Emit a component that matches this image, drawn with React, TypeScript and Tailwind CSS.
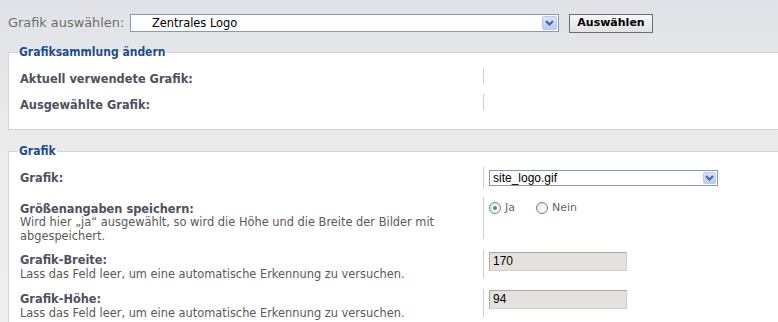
import React from "react";

const Chevron = () => (
  <svg width="9" height="6" viewBox="0 0 9 6" className="block">
    <path d="M1 1 L4.5 4.5 L8 1" fill="none" stroke="#4d6185" strokeWidth="2" />
  </svg>
);

function FakeSelect({ value, className, textClass, arrowClass }: { value: string; className: string; textClass: string; arrowClass: string }) {
  return (
    <div className={"flex items-center border border-[#7f9db9] bg-white " + className}>
      <span className={"flex-1 truncate text-black " + textClass}>{value}</span>
      <span className={"flex items-center justify-center rounded-[2px] border border-[#b9c9ef] bg-[linear-gradient(180deg,#d8e2fb,#b9cbf5)] " + arrowClass}>
        <Chevron />
      </span>
    </div>
  );
}

function Radio({ checked }: { checked?: boolean }) {
  return (
    <span className="flex h-[12px] w-[12px] items-center justify-center rounded-full border border-[#6f83a0] bg-[radial-gradient(circle_at_60%_60%,#ffffff,#dcdcd6)]">
      {checked && <span className="h-[4px] w-[4px] rounded-full bg-[#3aa53a]" />}
    </span>
  );
}

function Row({ h, mt, pt = "pt-[5px]", lh = "leading-[13px]", label, desc, children }: { h: string; mt: string; pt?: string; lh?: string; label: string; desc?: React.ReactNode; children?: React.ReactNode }) {
  return (
    <div className={"flex " + h + " " + mt}>
      <div className={"w-[463px] shrink-0 " + pt}>
        <div className={"text-[11.4px] font-bold text-[#4d525e] " + lh}>{label}</div>
        {desc && <div className="text-[11.4px] leading-[14px] text-[#595959]">{desc}</div>}
      </div>
      <div className="border-l border-[#cdcdcd] pl-[5px]">{children}</div>
    </div>
  );
}

export default function App() {
  return (
    <div className="h-[322px] w-[778px] overflow-hidden bg-[linear-gradient(180deg,#e1e2e7_0px,#ebebec_140px,#efefef_322px)] font-['DejaVu_Sans',Verdana,sans-serif]">
      <div className="mt-[14px] flex h-[18px] items-center pl-[8px]">
        <span className="w-[122px] text-[12.9px] text-[#6e6e6e]">Grafik auswählen:</span>
        <FakeSelect
          value="Zentrales Logo"
          className="h-[18px] w-[429px] pr-[1px]"
          textClass="pl-[21px] text-[11.4px] leading-[16px]"
          arrowClass="h-[14px] w-[15px]"
        />
        <button className="ml-[10px] h-[19px] w-[84px] border border-[#6c6c6c] bg-[linear-gradient(180deg,#f6f6f6,#e2e2e2)] text-[11px] font-bold leading-[16px] text-black">
          Auswählen
        </button>
      </div>

      <fieldset className="ml-[8px] mt-[13px] border border-r-0 border-[#d3d3d3] bg-white px-[11px] pb-[19px] pt-[9px]">
        <legend className="-ml-[2px] px-[1px] font-['DejaVu_Sans_Condensed','Liberation_Sans',sans-serif] text-[12px] font-bold leading-[14px] text-[#1b4e8f]">Grafiksammlung ändern</legend>
        <Row h="h-[16px]" mt="" label="Aktuell verwendete Grafik:" />
        <Row h="h-[16px]" mt="mt-[10px]" label="Ausgewählte Grafik:" />
      </fieldset>

      <fieldset className="ml-[8px] mt-[14px] border border-r-0 border-b-0 border-[#d3d3d3] bg-white px-[11px] pb-[20px] pt-[9px]">
        <legend className="-ml-[2px] px-[1px] font-['DejaVu_Sans_Condensed','Liberation_Sans',sans-serif] text-[12px] font-bold leading-[14px] text-[#1b4e8f]">Grafik</legend>
        <Row h="h-[21px]" mt="" label="Grafik:">
          <div className="pt-[3px]">
            <FakeSelect
              value="site_logo.gif"
              className="h-[16px] w-[229px] pr-[1px]"
              textClass="pl-[3px] font-['Liberation_Sans',Arial,sans-serif] text-[12px] leading-[14px]"
              arrowClass="h-[12px] w-[13px]"
            />
          </div>
        </Row>
        <Row
          h="h-[42px]"
          mt="mt-[9px]"
          pt="pt-[6px]"
          lh="leading-[12px]"
          label="Größenangaben speichern:"
          desc={
            <>
              Wird hier „ja“ ausgewählt, so wird die Höhe und die Breite der Bilder mit
              <br />
              abgespeichert.
            </>
          }
        >
          <div className="flex items-center pt-[5px] text-[11px] leading-[12px] text-[#666666]">
            <Radio checked />
            <span className="ml-[4px]">Ja</span>
            <span className="ml-[21px]"><Radio /></span>
            <span className="ml-[4px]">Nein</span>
          </div>
        </Row>
        <Row h="h-[28px]" mt="mt-[11px]" pt="pt-[4px]" label="Grafik-Breite:" desc="Lass das Feld leer, um eine automatische Erkennung zu versuchen.">
          <div className="pt-[2px]">
            <div className="h-[19px] w-[138px] border border-[#a9a9a9] border-b-[#d0d0d0] border-r-[#d0d0d0] bg-[#e5e2dd] pl-[3px] font-['Liberation_Sans',Arial,sans-serif] text-[12px] leading-[17px] text-black">170</div>
          </div>
        </Row>
        <Row h="h-[28px]" mt="mt-[11px]" pt="pt-[4px]" label="Grafik-Höhe:" desc="Lass das Feld leer, um eine automatische Erkennung zu versuchen.">
          <div className="pt-[1px]">
            <div className="h-[19px] w-[138px] border border-[#a9a9a9] border-b-[#d0d0d0] border-r-[#d0d0d0] bg-[#e5e2dd] pl-[3px] font-['Liberation_Sans',Arial,sans-serif] text-[12px] leading-[17px] text-black">94</div>
          </div>
        </Row>
      </fieldset>
    </div>
  );
}
